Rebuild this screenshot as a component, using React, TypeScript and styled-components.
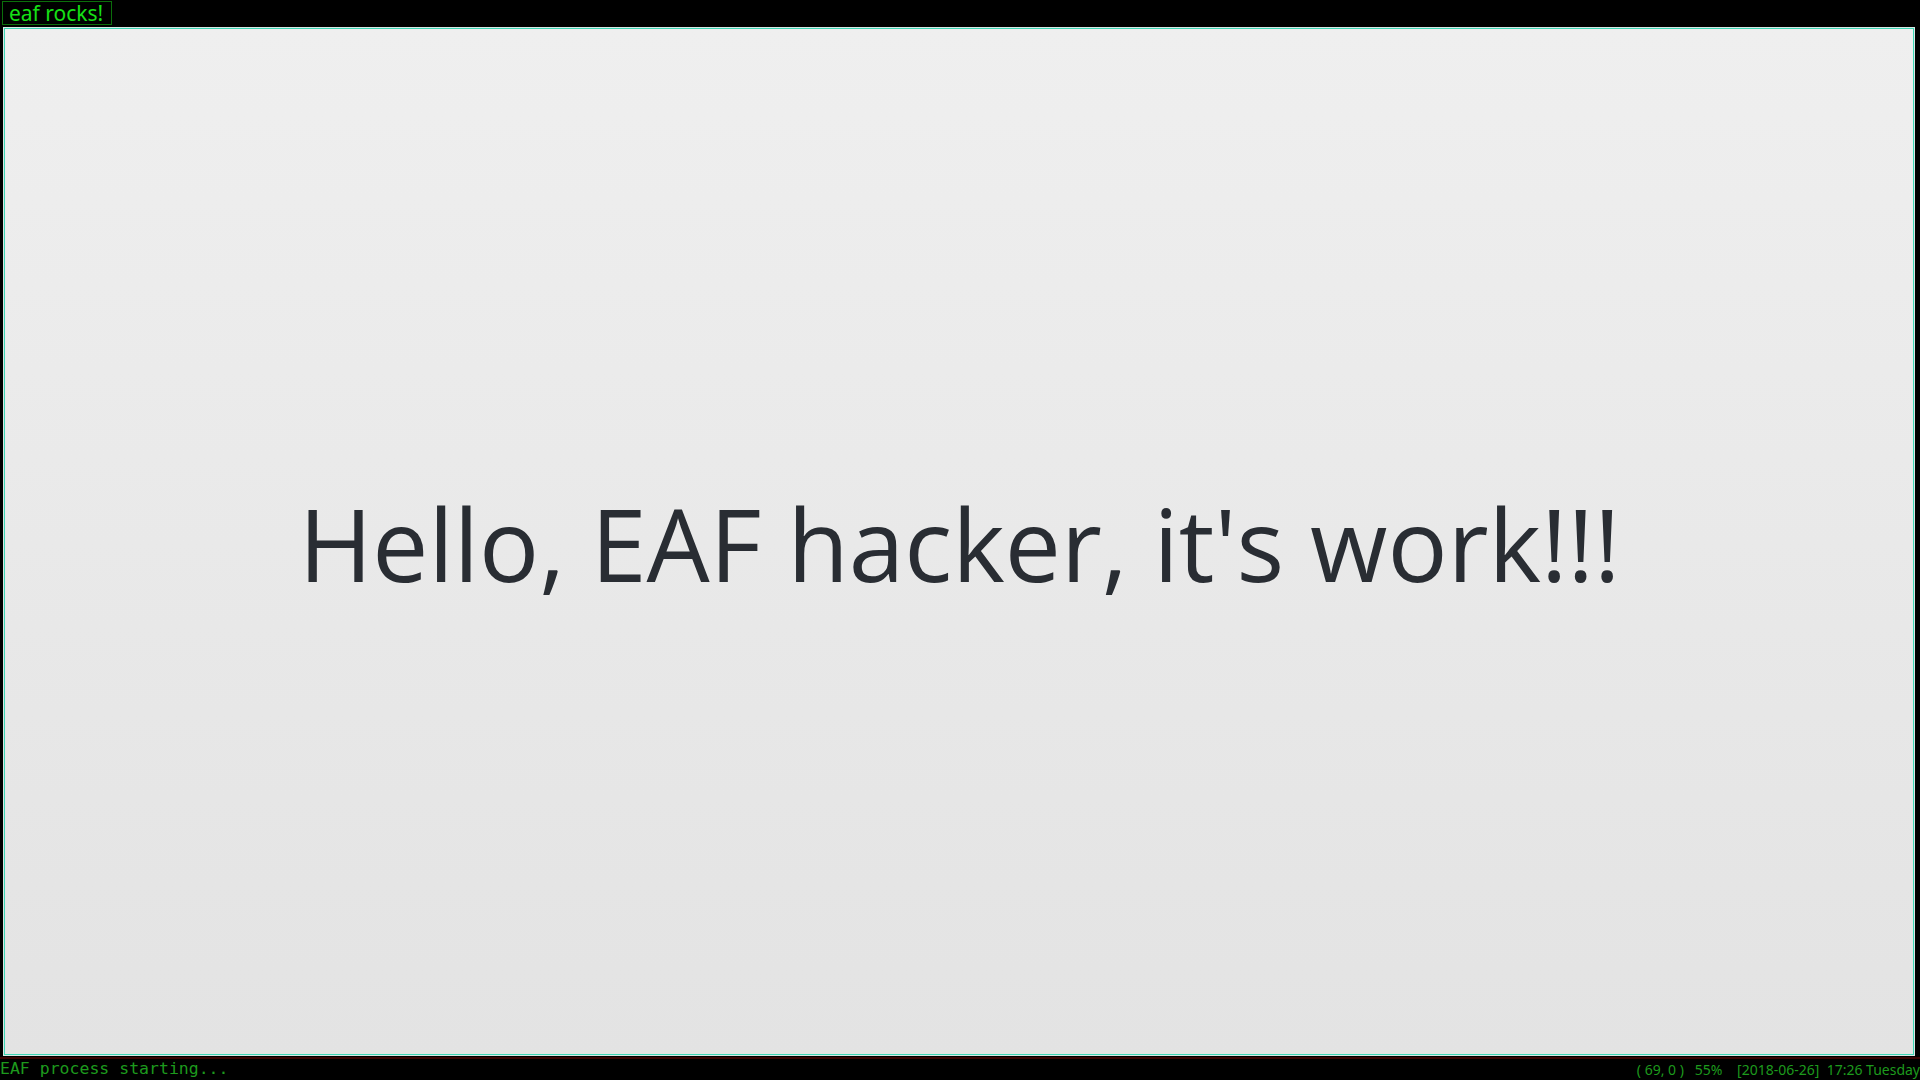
import React from "react";
import styled, { createGlobalStyle } from "styled-components";

const Global = createGlobalStyle`
  html, body { margin: 0; padding: 0; background: #000; }
  #root { width: 1920px; height: 1080px; }
`;

const Screen = styled.div`
  width: 1920px;
  height: 1080px;
  background: #000;
  display: flex;
  flex-direction: column;
  overflow: hidden;
`;

const TabBar = styled.div`
  height: 27px;
  display: flex;
  align-items: flex-start;
  padding: 1px 0 0 2px;
  box-sizing: border-box;
`;

const Tab = styled.div`
  height: 24px;
  box-sizing: border-box;
  border: 1px solid #0b6e0b;
  padding: 0 8px 0 6px;
  display: flex;
  align-items: center;
  color: #16e016;
  font-family: "Noto Sans", "Open Sans", sans-serif;
  font-size: 21px;
  line-height: 1;
`;

const Panel = styled.div`
  height: 1029px;
  margin: 0 5px 0 3px;
  box-sizing: border-box;
  border: 1px solid #d8e8e4;
  box-shadow: inset 0 0 0 1px #3ed6b5;
  background: linear-gradient(to bottom, #efefef, #e3e3e3);
  display: flex;
  align-items: center;
  justify-content: center;
`;

const Message = styled.div`
  font-family: "Open Sans", "Noto Sans", sans-serif;
  font-size: 100px;
  color: #292d33;
  line-height: 1;
  margin-top: 2px;
  margin-left: 1px;
`;

const Divider = styled.div`
  height: 2px;
  margin-top: 1px;
  background: #3a0404;
`;

const StatusBar = styled.div`
  flex: 1;
  display: flex;
  align-items: center;
  justify-content: space-between;
  color: #1d9a1d;
`;

const Echo = styled.span`
  font-family: "DejaVu Sans Mono", monospace;
  font-size: 16.5px;
  line-height: 1;
`;

const ModeLine = styled.span`
  font-family: "Noto Sans", "Open Sans", sans-serif;
  font-size: 14px;
  line-height: 1;
  white-space: pre;
  margin-top: 1px;
`;

export default function App() {
  return (
    <>
      <Global />
      <Screen>
        <TabBar>
          <Tab>eaf rocks!</Tab>
        </TabBar>
        <Panel>
          <Message>Hello, EAF hacker, it's work!!!</Message>
        </Panel>
        <Divider />
        <StatusBar>
          <Echo>EAF process starting...</Echo>
          <ModeLine>{"( 69, 0 )   55%    [2018-06-26]  17:26 Tuesday"}</ModeLine>
        </StatusBar>
      </Screen>
    </>
  );
}
